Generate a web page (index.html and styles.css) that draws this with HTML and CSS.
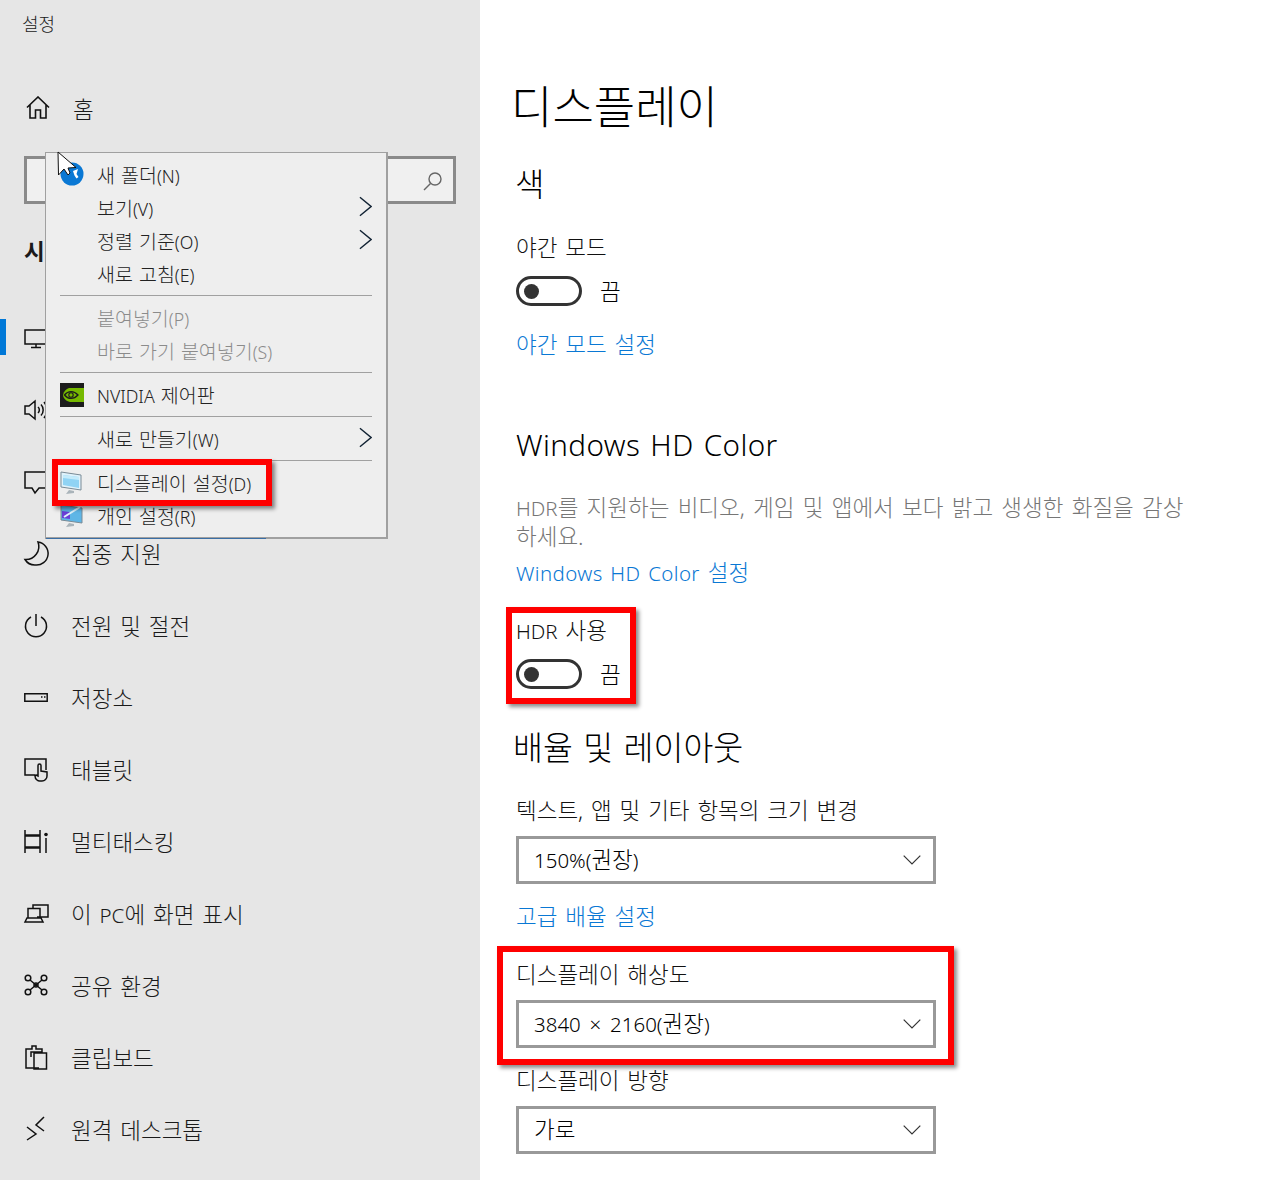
FILE: index.html
```html
<!DOCTYPE html>
<html lang="ko">
<head>
<meta charset="utf-8">
<title>설정</title>
<link rel="stylesheet" href="styles.css">
</head>
<body>
<div class="app">
  <aside class="sidebar">
    <div class="app-title">설정</div>
    <div class="home-row">
      <svg class="home-icon" viewBox="0 0 24 24"><path d="M1 11.500 12 1l11 10.500M4 8.500V22h5.500v-8h5v8H20V8.500"/></svg>
      <span>홈</span>
    </div>
    <div class="search">
      <svg class="search-icon" viewBox="0 0 20 20"><circle cx="12" cy="8" r="6"/><path d="M7.500 12.500 1 19"/></svg>
    </div>
    <div class="section-title">시스템</div>
    <nav class="nav">
      <div class="nav-row active"><svg class="icon" viewBox="0 0 24 24"><path d="M1 4h22v14H1zM12 18v3M7 21.500h10"/></svg><span>디스플레이</span></div>
      <div class="nav-row"><svg class="icon" viewBox="0 0 24 24"><path d="M1 8h4l6-5v18l-6-5H1zM14 9a4 4 0 0 1 0 6M17 6.500a8 8 0 0 1 0 11M20 4a12 12 0 0 1 0 16"/></svg><span>소리</span></div>
      <div class="nav-row"><svg class="icon" viewBox="0 0 24 24"><path d="M1 2h22v16h-8l-4 5-3-5H1z"/></svg><span>알림 및 작업</span></div>
      <div class="nav-row"><svg class="icon" viewBox="0 0 24 24"><path d="M14 0a11.500 11.500 0 0 1-3 23A11.500 11.500 0 0 1 1 17.500 13 13 0 0 0 14 0z"/></svg><span>집중 지원</span></div>
      <div class="nav-row"><svg class="icon" viewBox="0 0 24 24"><path d="M7 3a10.500 10.500 0 1 0 10 0M12 0v12"/></svg><span>전원 및 절전</span></div>
      <div class="nav-row"><svg class="icon" viewBox="0 0 24 24"><path d="M.8 7.800h22.400v7.500H.8zM17 11h1.500M20 11h1.500"/></svg><span>저장소</span></div>
      <div class="nav-row"><svg class="icon" viewBox="0 0 24 24"><path d="M11 17H1V1h21v11M13 22a5 5 0 0 1-2-4l1-1 2 1V7.500a1.500 1.500 0 0 1 3 0V13l6 1v4a5 5 0 0 1-5 5h-2a4 4 0 0 1-3-1z"/></svg><span>태블릿</span></div>
      <div class="nav-row"><svg class="icon" viewBox="0 0 24 24"><path d="M1 0v5h15V0M1 6h15v11H1zM1 23v-5h15v5M22 8v15"/><circle class="solid" cx="22" cy="4.500" r="1.800"/></svg><span>멀티태스킹</span></div>
      <div class="nav-row"><svg class="icon" viewBox="0 0 24 24"><path d="M9 6V3h15v12H13M4 6.500h12V16H4zM1 20h18l-2-4H3z"/></svg><span>이 <span class="lat">PC</span>에 화면 표시</span></div>
      <div class="nav-row"><svg class="icon" viewBox="0 0 24 24"><circle cx="4" cy="4" r="2.800"/><circle cx="20" cy="4" r="2.800"/><circle cx="4" cy="18" r="2.800"/><circle cx="20" cy="18" r="2.800"/><circle cx="12" cy="11" r="2"/><path d="M6 6l12 10M18 6 6 16"/></svg><span>공유 환경</span></div>
      <div class="nav-row"><svg class="icon" viewBox="0 0 24 24"><path d="M15 22H2V3h6V0h4v3h6v3H7v5M10 7h12.500v16H10z"/></svg><span>클립보드</span></div>
      <div class="nav-row"><svg class="icon" viewBox="0 0 24 24"><path d="M3 9l9 7-9 6M20-1l-8 8 8 6"/></svg><span>원격 데스크톱</span></div>
    </nav>
  </aside>

  <main class="content">
    <h1 class="page-title">디스플레이</h1>
    <h2 class="heading heading-color">색</h2>
    <div class="label label-night">야간 모드</div>
    <div class="toggle-row toggle-night"><span class="toggle"><span class="knob"></span></span><span class="state">끔</span></div>
    <a class="link link-night">야간 모드 설정</a>
    <h2 class="heading heading-hd"><span class="lat">Windows HD Color</span></h2>
    <p class="desc"><span class="lat">HDR</span>를 지원하는 비디오, 게임 및 앱에서 보다 밝고 생생한 화질을 감상<br>하세요.</p>
    <a class="link link-hd"><span class="lat">Windows HD Color</span> 설정</a>
    <div class="label label-hdr"><span class="lat">HDR</span> 사용</div>
    <div class="toggle-row toggle-hdr"><span class="toggle"><span class="knob"></span></span><span class="state">끔</span></div>
    <h2 class="heading heading-scale">배율 및 레이아웃</h2>
    <div class="label label-scale">텍스트, 앱 및 기타 항목의 크기 변경</div>
    <div class="select"><span class="value"><span class="lat">150%(</span>권장<span class="lat">)</span></span><svg class="chev" viewBox="0 0 18 10"><path d="M.7.700 9 9l8.300-8.300"/></svg></div>
    <a class="link link-scale">고급 배율 설정</a>
    <div class="label label-res">디스플레이 해상도</div>
    <div class="select"><span class="value"><span class="lat">3840 × 2160(</span>권장<span class="lat">)</span></span><svg class="chev" viewBox="0 0 18 10"><path d="M.7.700 9 9l8.300-8.300"/></svg></div>
    <div class="label label-orient">디스플레이 방향</div>
    <div class="select"><span class="value">가로</span><svg class="chev" viewBox="0 0 18 10"><path d="M.7.700 9 9l8.300-8.300"/></svg></div>
  </main>

  <div class="menu">
    <div class="menu-row"><span class="menu-ico"></span><span>새 폴더<span class="lat">(N)</span></span></div>
    <div class="menu-row"><span class="menu-ico"></span><span>보기<span class="lat">(V)</span></span><svg class="sub" viewBox="0 0 14 22"><path d="M1 1l12 10L1 21"/></svg></div>
    <div class="menu-row"><span class="menu-ico"></span><span>정렬 기준<span class="lat">(O)</span></span><svg class="sub" viewBox="0 0 14 22"><path d="M1 1l12 10L1 21"/></svg></div>
    <div class="menu-row"><span class="menu-ico"></span><span>새로 고침<span class="lat">(E)</span></span></div>
    <div class="menu-sep"></div>
    <div class="menu-row disabled"><span class="menu-ico"></span><span>붙여넣기<span class="lat">(P)</span></span></div>
    <div class="menu-row disabled"><span class="menu-ico"></span><span>바로 가기 붙여넣기<span class="lat">(S)</span></span></div>
    <div class="menu-sep"></div>
    <div class="menu-row"><span class="menu-ico"><svg class="app-ico" viewBox="0 0 24 24"><rect width="24" height="24" fill="#1c1c1c"/><path d="M9 5h15v14H10C6 18 3 15 3 12 4 8 6 6 9 5z" fill="#76b900"/><path d="M4.500 12C8 7.500 14 7.500 18 12 14 16.500 8 16.500 4.500 12z" fill="none" stroke="#1c1c1c" stroke-width="1.300"/><circle cx="11" cy="12" r="2.200" fill="none" stroke="#1c1c1c" stroke-width="1.100"/></svg></span><span><span class="lat">NVIDIA</span> 제어판</span></div>
    <div class="menu-sep"></div>
    <div class="menu-row"><span class="menu-ico"></span><span>새로 만들기<span class="lat">(W)</span></span><svg class="sub" viewBox="0 0 14 22"><path d="M1 1l12 10L1 21"/></svg></div>
    <div class="menu-sep"></div>
    <div class="menu-row"><span class="menu-ico"><svg class="app-ico" viewBox="0 0 24 24"><path d="M1 1l20 3v15L1 16z" fill="#dff2fb" stroke="#7a8b96"/><path d="M3 4l16 2v11L3 14z" fill="#8fd3f4"/><path d="M3 4l16 2v3L3 7z" fill="#c4ebfb"/><path d="M9 19l5 1v2l-8 1z" fill="#aab4ba"/></svg></span><span>디스플레이 설정<span class="lat">(D)</span></span></div>
    <div class="menu-row"><span class="menu-ico"><svg class="app-ico" viewBox="0 0 24 24"><path d="M1 1l21 3v15L1 16z" fill="#5fb6e6" stroke="#7a8b96"/><path d="M2 7l8 1v7l-8-1z" fill="#6a3fd6"/><path d="M4 13 20 3" stroke="#dff2fb" stroke-width="2"/><path d="M9 19l5 1v2l-8 1z" fill="#aab4ba"/></svg></span><span>개인 설정<span class="lat">(R)</span></span></div>
    <div class="menu-edge"></div>
  </div>

  <svg class="cursor" viewBox="0 0 30 36">
    <circle cx="15" cy="23" r="11.500" fill="#0a78d4"/>
    <path d="M1 1l.5 23 5.500-6 4 6 2-2-2-5 8-.5z" fill="#fff" stroke="#111" stroke-width="1"/>
    <path d="M16 20l5-2-1.500 5 2 3-2 1.500-2-3z" fill="#fff"/>
  </svg>

  <div class="mark mark-menu"></div>
  <div class="mark mark-hdr"></div>
  <div class="mark mark-res"></div>
</div>
</body>
</html>
```

FILE: styles.css
```css
* { box-sizing: border-box; }
html, body { margin: 0; padding: 0; }
body {
  width: 1278px;
  height: 1180px;
  overflow: hidden;
  background: #fff;
  color: #000;
  font-family: "Noto Sans", "Noto Sans CJK KR", sans-serif;
  font-size: 22.5px;
  font-weight: 300;
  word-spacing: 2px;
}
.lat { font-size: .91em; font-weight: 350; }
.app { position: relative; display: flex; width: 1278px; height: 1180px; }

/* sidebar */
.sidebar { flex: 0 0 480px; background: #e6e6e6; color: #1a1a1a; }
.app-title { padding-left: 22px; height: 48px; line-height: 48px; font-size: 18px; }
.home-row { display: flex; align-items: center; height: 72px; margin-top: 24px; }
.home-row span { margin-left: 23px; }
.home-icon { width: 24px; height: 24px; margin-left: 26px; fill: none; stroke: #111; stroke-width: 1.6; }
.search {
  display: flex; align-items: center; justify-content: flex-end;
  width: 432px; height: 48px; margin: 12px 0 0 24px; padding: 2px 10px 0 0;
  border: 3px solid #8a8a8a; background: #f0f0f0;
}
.search-icon { width: 20px; height: 20px; fill: none; stroke: #666; stroke-width: 1.4; }
.section-title { margin: 24px 0 26px 24px; height: 48px; line-height: 48px; font-weight: 700; font-size: 22.5px; }
.nav-row { position: relative; display: flex; align-items: center; height: 72px; }
.nav-row > span { margin-left: 23px; padding-bottom: 2px; }
.nav-row.active::before { content: ""; position: absolute; left: 0; top: 17px; width: 6px; height: 36px; background: #0078d7; }
.icon { flex: none; width: 24px; height: 24px; margin-left: 24px; fill: none; stroke: #111; stroke-width: 1.5; overflow: visible; }
.icon .solid { fill: #111; stroke: none; }

/* content */
.content { flex: 1; padding: 77px 0 0 36px; }
.page-title { margin: 0 0 0 -5px; height: 60px; line-height: 60px; font-size: 45px; font-weight: 300; }
.heading { margin: 0; height: 40px; line-height: 40px; font-size: 32px; font-weight: 300; }
.heading-color { margin: 27px 0 0 -1px; }
.heading-hd { margin-top: 64px; }
.heading-hd .lat { font-size: .925em; letter-spacing: .4px; }
.heading-scale { margin: 39px 0 0 -3px; font-size: 32.5px; }
.label { height: 30px; line-height: 30px; color: #111; }
.label-night { margin-top: 29px; }
.label-hdr { margin-top: 28px; }
.label-scale { margin-top: 28px; }
.label-res { margin-top: 28px; }
.label-orient { margin-top: 18px; }
.toggle-row { display: flex; align-items: center; gap: 18px; height: 30px; }
.state { padding-bottom: 2px; }
.toggle-night { margin-top: 13px; }
.toggle-hdr { margin-top: 13px; }
.toggle { display: flex; align-items: center; width: 66px; height: 30px; padding-left: 5px; border: 3px solid #333; border-radius: 15px; }
.knob { width: 15px; height: 15px; border-radius: 50%; background: #333; }
.link { display: block; height: 30px; line-height: 30px; color: #0a78d4; }
.link .lat { letter-spacing: .38px; }
.link-night { margin-top: 24px; }
.link-hd { margin-top: 7px; }
.link-scale { margin-top: 18px; }
.desc { margin: 30px 0 0; line-height: 28.5px; color: #767676; white-space: nowrap; word-spacing: 2.4px; }
.select {
  display: flex; align-items: center; justify-content: space-between;
  width: 420px; height: 48px; margin-top: 10px; padding: 0 12px 0 15px;
  border: 3px solid #999;
}
.value { padding-bottom: 3px; word-spacing: 3.5px; }
.chev { width: 18px; height: 10px; fill: none; stroke: #333; stroke-width: 1.2; }

/* context menu */
.menu {
  position: absolute; left: 45px; top: 152px; width: 343px; height: 387px;
  padding: 5px 14px 0 14px;
  background: #eee; border: 1px solid #a0a0a0; border-right-width: 2px; border-bottom-width: 2px;
  font-size: 19.5px; color: #222; word-spacing: 1px;
}
.menu-row { position: relative; display: flex; align-items: center; height: 33px; }
.menu-row.disabled { color: #8b8b8b; }
.menu-ico { flex: none; display: flex; width: 37px; }
.app-ico { width: 24px; height: 24px; }
.menu-sep { height: 1px; margin: 5px 0; background: #a0a0a0; }
.sub { position: absolute; right: 0; top: 5px; width: 13px; height: 21px; fill: none; stroke: #123; stroke-width: 1.5; }
.menu-edge { position: absolute; left: 0; bottom: -2px; width: 220px; height: 1px; background: #3a6ea5; }

/* cursor and annotation overlays */
.cursor { position: absolute; left: 57px; top: 151px; width: 30px; height: 36px; }
.mark { position: absolute; border: 6px solid #f00; box-shadow: 3px 3px 4px rgba(0, 0, 0, .45); }
.mark-menu { left: 52px; top: 459px; width: 220px; height: 47px; }
.mark-hdr { left: 506px; top: 607px; width: 130px; height: 97px; }
.mark-res { left: 497px; top: 946px; width: 457px; height: 119px; }
```
